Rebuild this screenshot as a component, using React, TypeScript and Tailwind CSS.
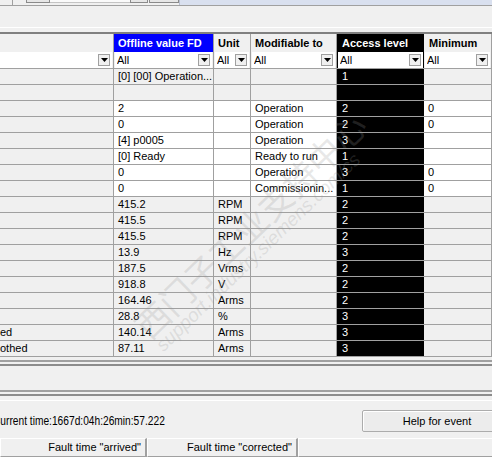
import React from 'react';

type Row = { label?: string; value: string; unit?: string; mod?: string; access: string; min?: string; edit?: boolean };

const ROWS: Row[] = [
  { value: '[0] [00] Operation...', access: '1' },
  { value: '', access: '' },
  { value: '2', mod: 'Operation', access: '2', min: '0', edit: true },
  { value: '0', mod: 'Operation', access: '2', min: '0', edit: true },
  { value: '[4] p0005', mod: 'Operation', access: '3', edit: true },
  { value: '[0] Ready', mod: 'Ready to run', access: '1', edit: true },
  { value: '0', mod: 'Operation', access: '3', min: '0', edit: true },
  { value: '0', mod: 'Commissionin...', access: '1', min: '0', edit: true },
  { value: '415.2', unit: 'RPM', access: '2' },
  { value: '415.5', unit: 'RPM', access: '2' },
  { value: '415.5', unit: 'RPM', access: '2' },
  { value: '13.9', unit: 'Hz', access: '3' },
  { value: '187.5', unit: 'Vrms', access: '2' },
  { value: '918.8', unit: 'V', access: '2' },
  { value: '164.46', unit: 'Arms', access: '2' },
  { value: '28.8', unit: '%', access: '3' },
  { label: 'ed', value: '140.14', unit: 'Arms', access: '3' },
  { label: 'othed', value: '87.11', unit: 'Arms', access: '3' },
];

function Drop() {
  return (
    <div className="w-[12px] h-[12px] bg-[#f0f0f0] border border-[#a0a0a0] flex items-center justify-center shrink-0">
      <svg width="7" height="4" viewBox="0 0 7 4">
        <path d="M0 0h7L3.5 4z" fill="#000" />
      </svg>
    </div>
  );
}

function Filter({ text = '' }: { text?: string }) {
  return (
    <div className="h-full bg-white flex items-center pl-[2px] pr-[2px]">
      <span className="flex-1 whitespace-nowrap overflow-hidden">{text}</span>
      <Drop />
    </div>
  );
}

export default function App() {
  return (
    <div className="relative w-[492px] h-[462px] overflow-hidden bg-[#f0f0f0] text-black text-[11px] font-['Liberation_Sans',Arial,sans-serif]">
      {/* toolbar remains */}
      <div className="flex h-[6px] border-b border-[#a0a0a0]">
        <div className="w-[12px]" />
        <div className="w-px bg-[#a0a0a0]" />
        <div className="w-[13px]" />
        <div className="w-[24px] h-[3px] bg-[#e6e6e6] border-x border-b border-[#8a8a8a]" />
        <div className="w-[80px] h-[3px] bg-[#fafafa] border-b border-[#c4c4c4]" />
        <div className="w-[18px] h-[3px] bg-[#e6e6e6] border-x border-b border-[#8a8a8a]" />
        <div className="w-px" />
        <div className="w-[30px] h-[3px] bg-[#e6e6e6] border-x border-b border-[#8a8a8a]" />
        <div className="flex-1 bg-[#d9e0ef] border-l border-[#b8bfd0]" />
      </div>
      <div className="h-[21px]" />
      <div className="h-px bg-white" />
      <div className="h-[4px]" />
      <div className="h-[2px] bg-[#808080]" />

      {/* header */}
      <div className="flex h-[18px] leading-[18px] font-bold">
        <div className="w-[114px] border-r border-[#a0a0a0]" />
        <div className="w-[100px] border-r border-[#a0a0a0] bg-[#0000ff] text-white pl-[4px]">Offline value FD</div>
        <div className="w-[37px] border-r border-[#a0a0a0] pl-[4px]">Unit</div>
        <div className="w-[86px] border-r border-[#a0a0a0] pl-[4px]">Modifiable to</div>
        <div className="w-[87px] bg-black text-white pl-[5px]">Access level</div>
        <div className="w-[68px] border-r border-[#a0a0a0] pl-[5px]">Minimum</div>
      </div>

      {/* filter row */}
      <div className="flex h-[17px] border-b border-[#a0a0a0] leading-[15px]">
        <div className="w-[114px] border-r border-[#a0a0a0] pr-[1px]"><Filter /></div>
        <div className="w-[100px] border-r border-[#a0a0a0] px-[1px]"><Filter text="All" /></div>
        <div className="w-[37px] border-r border-[#a0a0a0] px-[1px]"><Filter text="All" /></div>
        <div className="w-[86px] border-r border-[#a0a0a0] px-[1px]"><Filter text="All" /></div>
        <div className="w-[87px] bg-black pl-[1px] pr-[1px]"><Filter text="All" /></div>
        <div className="w-[68px] border-r border-[#a0a0a0] px-[1px]"><Filter text="All" /></div>
      </div>

      {/* data rows */}
      {ROWS.map((r, i) => (
        <div key={i} className="flex h-[16px] border-b border-[#a0a0a0] leading-[15px] whitespace-nowrap">
          <div className="w-[114px] border-r border-[#a0a0a0] overflow-hidden">{r.label}</div>
          <div className={`w-[100px] border-r border-[#a0a0a0] pl-[4px] overflow-hidden ${r.edit ? 'bg-white' : 'bg-[#f0f0f0]'}`}>{r.value}</div>
          <div className={`w-[37px] border-r border-[#a0a0a0] pl-[4px] overflow-hidden ${r.edit ? 'bg-white' : 'bg-[#f0f0f0]'}`}>{r.unit}</div>
          <div className={`w-[86px] border-r border-[#a0a0a0] pl-[4px] overflow-hidden ${r.edit ? 'bg-white' : 'bg-[#f0f0f0]'}`}>{r.mod}</div>
          <div className="w-[87px] bg-black text-white pl-[5px]">{r.access}</div>
          <div className={`w-[68px] border-r border-[#a0a0a0] pl-[4px] ${r.edit ? 'bg-white' : 'bg-[#f0f0f0]'}`}>{r.min}</div>
        </div>
      ))}

      {/* splitters */}
      <div className="h-[3px]" />
      <div className="h-[2px] bg-[#a0a0a0]" />
      <div className="h-[2px]" />
      <div className="h-[2px] bg-[#8c8c8c]" />
      <div className="h-[24px]" />
      <div className="h-[2px] bg-[#a0a0a0]" />
      <div className="h-[2px]" />
      <div className="h-[2px] bg-[#8c8c8c]" />
      <div className="h-[4px]" />
      <div className="h-px bg-white" />

      {/* status + help */}
      <div className="flex items-start h-[37px] pt-[9px]">
        <span className="inline-block -ml-[7px] origin-left scale-x-[0.85] leading-[22px] text-[12px] whitespace-nowrap">Current time:1667d:04h:26min:57.222</span>
        <button className="ml-auto -mr-[20px] w-[150px] h-[22px] shrink-0 border border-[#acacac] rounded-[2px] bg-[#ececec] shadow-[inset_1px_1px_0_#fff] text-[11px] leading-[20px] text-center">
          Help for event
        </button>
      </div>

      {/* fault list header */}
      <div className="flex h-[19px] leading-[17px] text-[11px] whitespace-nowrap">
        <div className="w-[147px] border-t border-l border-white border-r-2 border-b border-r-[#a0a0a0] border-b-[#a0a0a0] text-right pr-[4px]">Fault time "arrived"</div>
        <div className="w-[151px] border-t border-l border-white border-r-2 border-b border-r-[#a0a0a0] border-b-[#a0a0a0] text-right pr-[4px]">Fault time "corrected"</div>
        <div className="flex-1 border-t border-l border-white border-b border-b-[#a0a0a0]" />
      </div>
      <div className="flex h-[6px] bg-white overflow-hidden text-[11px] leading-[15px] whitespace-nowrap">
        <div className="w-[147px] pl-[60px] pt-[2px] overflow-hidden">1667d:04h:21:813</div>
        <div className="w-[151px] pl-[53px] pt-[2px] overflow-hidden">1667d:04h:21:813</div>
      </div>

      {/* watermark */}
      <div className="pointer-events-none absolute left-[250px] top-[225px] -translate-x-1/2 -translate-y-1/2 -rotate-[44deg] whitespace-nowrap text-[34px] leading-none text-[rgba(150,150,150,0.22)] font-['Noto_Sans_CJK_SC',sans-serif]">
        西门子工业支持中心
      </div>
      <div className="pointer-events-none absolute left-[258px] top-[252px] -translate-x-1/2 -translate-y-1/2 -rotate-[44deg] whitespace-nowrap text-[19px] italic leading-none text-[rgba(150,150,150,0.22)]">
        support.industry.siemens.com/cs
      </div>
    </div>
  );
}
